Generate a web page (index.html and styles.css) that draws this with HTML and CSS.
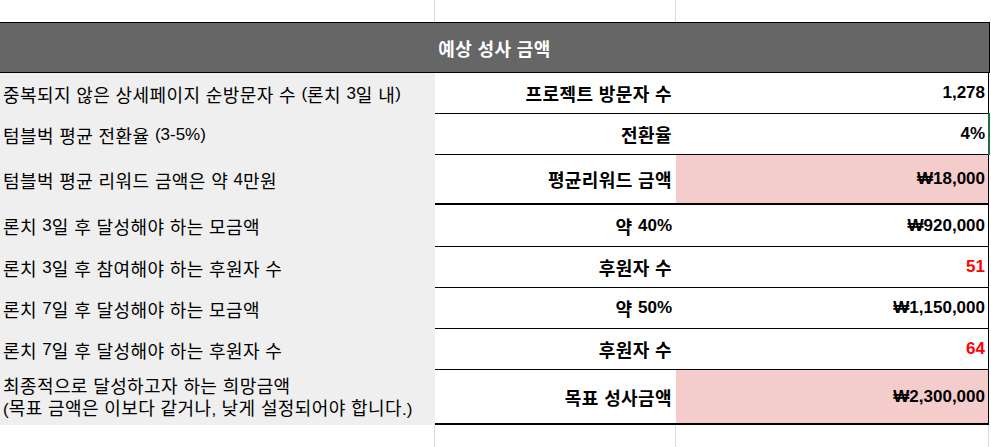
FILE: index.html
```html
<!DOCTYPE html>
<html lang="ko">
<head>
<meta charset="utf-8">
<title>예상 성사 금액</title>
<link rel="stylesheet" href="styles.css">
</head>
<body>
<div class="sheet">
  <div class="row gap-row">
    <div class="cell grid"></div>
    <div class="cell grid"></div>
    <div class="cell"></div>
  </div>
  <div class="header ko">예상 성사 금액</div>
  <div class="row">
    <div class="cell label ko">중복되지 않은 상세페이지 순방문자 수 <span class="lat">(</span>론치 <span class="lat">3</span>일 내<span class="lat">)</span></div>
    <div class="cell key ko">프로젝트 방문자 수</div>
    <div class="cell val">1,278</div>
  </div>
  <div class="row">
    <div class="cell label ko">텀블벅 평균 전환율 <span class="lat">(3-5%)</span></div>
    <div class="cell key ko">전환율</div>
    <div class="cell val selected">4%</div>
  </div>
  <div class="row tall thick">
    <div class="cell label ko">텀블벅 평균 리워드 금액은 약 <span class="lat">4</span>만원</div>
    <div class="cell key ko">평균리워드 금액</div>
    <div class="cell val pink">₩18,000</div>
  </div>
  <div class="row r41">
    <div class="cell label ko">론치 <span class="lat">3</span>일 후 달성해야 하는 모금액</div>
    <div class="cell key ko">약 <span class="lat">40%</span></div>
    <div class="cell val">₩920,000</div>
  </div>
  <div class="row">
    <div class="cell label ko">론치 <span class="lat">3</span>일 후 참여해야 하는 후원자 수</div>
    <div class="cell key ko">후원자 수</div>
    <div class="cell val red">51</div>
  </div>
  <div class="row">
    <div class="cell label ko">론치 <span class="lat">7</span>일 후 달성해야 하는 모금액</div>
    <div class="cell key ko">약 <span class="lat">50%</span></div>
    <div class="cell val">₩1,150,000</div>
  </div>
  <div class="row">
    <div class="cell label ko">론치 <span class="lat">7</span>일 후 달성해야 하는 후원자 수</div>
    <div class="cell key ko">후원자 수</div>
    <div class="cell val red">64</div>
  </div>
  <div class="row last thick">
    <div class="cell label ko multi"><div>최종적으로 달성하고자 하는 희망금액</div><div><span class="lat">(</span>목표 금액은 이보다 같거나<span class="lat">,</span> 낮게 설정되어야 합니다<span class="lat">.)</span></div></div>
    <div class="cell key ko">목표 성사금액</div>
    <div class="cell val pink">₩2,300,000</div>
  </div>
  <div class="row gap-row bottom">
    <div class="cell grid"></div>
    <div class="cell grid"></div>
    <div class="cell grid"></div>
  </div>
</div>
</body>
</html>
```

FILE: styles.css
```css
html, body {
  margin: 0;
  padding: 0;
  background: #ffffff;
}

body {
  font-family: "Liberation Sans", "Noto Sans CJK KR", sans-serif;
  font-size: 17px;
  color: #000000;
}

.sheet {
  width: 990px;
}

.row {
  display: grid;
  grid-template-columns: 435px 241px 313px 1px;
  height: 41px;
}

.row .cell:nth-child(3) {
  border-right: 1px solid #000;
}

.gap-row {
  height: 22px;
}

.gap-row .cell:nth-child(3) {
  border-right: none;
}

.gap-row.bottom {
  height: 23px;
}

.gap-row.bottom .cell:nth-child(3) {
  border-right: 1px solid #dadada;
}

.grid {
  border-right: 1px solid #dadada;
}

.header {
  height: 49px;
  width: 989px;
  border-top: 1px solid #000;
  border-bottom: 1px solid #000;
  border-right: 1px solid #000;
  background: #666666;
  color: #ffffff;
  font-weight: bold;
  display: flex;
  align-items: center;
  justify-content: center;
}

.cell {
  display: flex;
  align-items: center;
  box-sizing: border-box;
  white-space: pre;
}

.ko {
  font-size: 18px;
  letter-spacing: 0.4px;
}

.lat {
  font-size: 17px;
  letter-spacing: 0;
}

.label {
  background: #efefef;
  padding-left: 3px;
}

.key,
.val {
  border-bottom: 1px solid #000;
  justify-content: flex-end;
  font-weight: bold;
}

.key {
  padding-right: 4px;
}

.val {
  padding-right: 3px;
}

.r41 {
  height: 42px;
}

.tall {
  height: 50px;
}

.last {
  height: 55px;
}

.thick .key,
.thick .val {
  border-bottom-width: 2px;
}

.pink {
  background: #f4cccc;
}

.red {
  color: #ff0000;
}

.multi {
  flex-direction: column;
  align-items: flex-start;
  justify-content: center;
  line-height: 22px;
  padding-top: 2px;
}

.selected {
  position: relative;
}

.selected::after {
  content: "";
  position: absolute;
  right: -2px;
  top: -1px;
  bottom: -1px;
  width: 2px;
  background: #1e7145;
}
```
